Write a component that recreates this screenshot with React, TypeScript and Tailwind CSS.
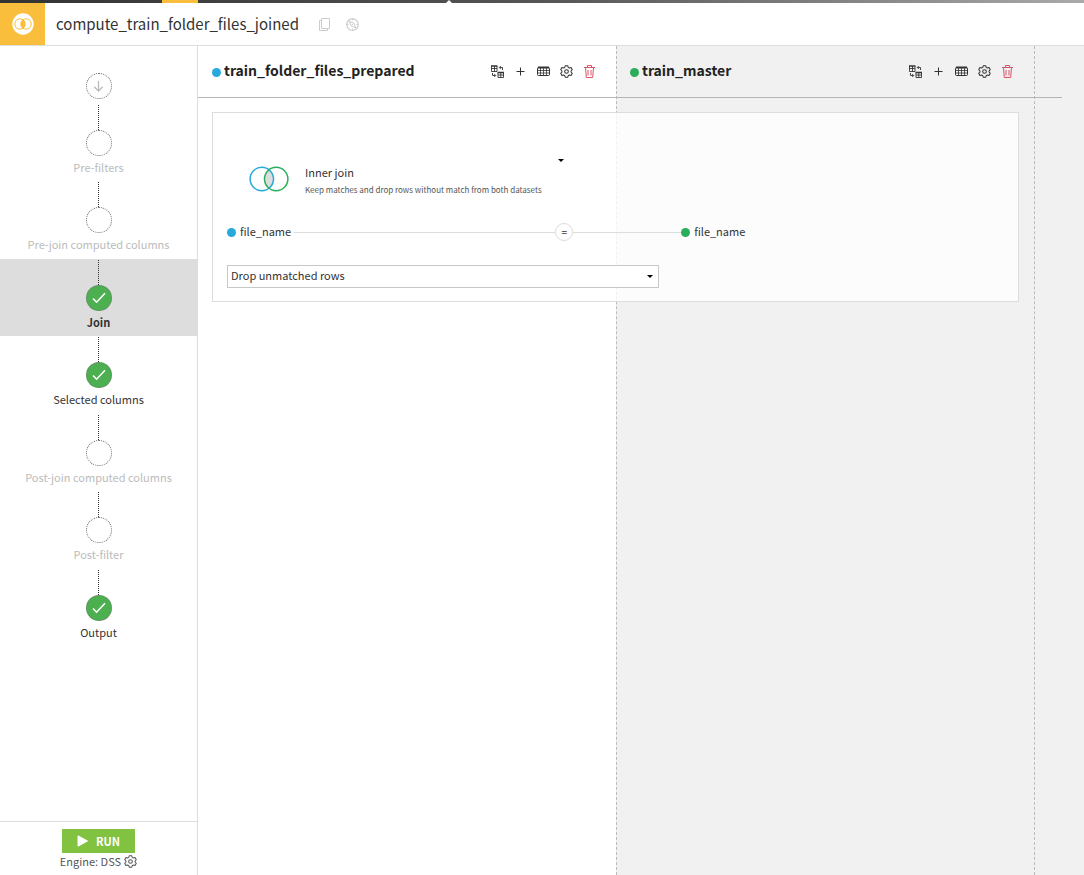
import type { ReactNode } from "react";

type StepStatus = "empty" | "done";

type Step = {
  label: string;
  status: StepStatus;
  active?: boolean;
};

const steps: Step[] = [
  { label: "Pre-filters", status: "empty" },
  { label: "Pre-join computed columns", status: "empty" },
  { label: "Join", status: "done", active: true },
  { label: "Selected columns", status: "done" },
  { label: "Post-join computed columns", status: "empty" },
  { label: "Post-filter", status: "empty" },
  { label: "Output", status: "done" },
];

const GearIcon = () => (
  <svg width="13" height="13" viewBox="0 0 24 24" fill="none" stroke="currentColor" strokeWidth="1.9">
    <path d="M9.8 1.2h4.4l1 3.2 2 1.2 3.3-.8 2.2 3.9-2.3 2.4v1.8l2.3 2.4-2.2 3.9-3.3-.8-2 1.2-1 3.2H9.8l-1-3.2-2-1.2-3.3.8-2.2-3.9 2.3-2.4v-1.8L1.3 8.7l2.2-3.9 3.3.8 2-1.2z" strokeLinejoin="round" />
    <circle cx="12" cy="12" r="3.4" />
  </svg>
);

const ReplaceIcon = () => (
  <svg width="13" height="13" viewBox="0 0 13 13" fill="none" stroke="currentColor">
    <path d="M.5 1v5.5h5.5V1M.5 3.5H6M3.5 1v5.5M7 7.5v5h5.5v-5M7 10h5.5M9.8 7.5v5" strokeWidth=".9" />
    <path d="M0 1h6.4M6.6 7.5H13" strokeWidth="1.4" />
    <path d="M11.5 5V2.5H8.5M9.8 1 8.3 2.5 9.8 4M1.5 8v2.5h3M3.2 9l1.5 1.5L3.2 12" strokeWidth=".9" />
  </svg>
);

const PlusIcon = () => (
  <svg width="13" height="13" viewBox="0 0 13 13" fill="none" stroke="currentColor">
    <path d="M6.5 2.5v8M2.5 6.5h8" />
  </svg>
);

const TableIcon = () => (
  <svg width="13" height="13" viewBox="0 0 13 13" fill="none" stroke="currentColor">
    <rect x=".5" y="2.5" width="12" height="8" rx="1" />
    <path d="M1 2.5h11" strokeWidth="2" />
    <path d="M.5 5.5h12M.5 8h12M3.5 3v7.5M6.5 3v7.5M9.5 3v7.5" strokeWidth=".8" />
  </svg>
);

const TrashIcon = () => (
  <svg width="13" height="13" viewBox="0 0 13 13" fill="none" stroke="currentColor">
    <path d="M1 2.5h11M4.5 2.5v-2h4v2M2.5 2.5l.8 10h6.4l.8-10M5 5v5.5M8 5v5.5" />
  </svg>
);

const CheckIcon = () => (
  <svg width="14" height="12" viewBox="0 0 14 12" fill="none" stroke="white" strokeWidth="1.6">
    <path d="M1 6.5 4.6 10.2 13 1.2" />
  </svg>
);

const Caret = () => (
  <svg width="6" height="3" viewBox="0 0 6 3">
    <path d="M0 0h6L3 3z" fill="black" />
  </svg>
);

const StepCircle = ({ status }: { status: StepStatus }) =>
  status === "done" ? (
    <span className="flex size-[26px] items-center justify-center rounded-full border border-dotted border-[#777] bg-[#4caf50]">
      <CheckIcon />
    </span>
  ) : (
    <span className="size-[26px] rounded-full border border-dotted border-[#666]" />
  );

const StepItem = ({ label, status, active }: Step) => (
  <li className={active ? "flex-1 bg-[#dddddd]" : "flex-1"}>
    <button className="flex w-full flex-col items-center pt-px">
      <span className="h-[25px] border-l border-dotted border-[#333]" />
      <StepCircle status={status} />
      <span
        className={
          active
            ? "mt-[3px] leading-4 font-bold text-[#333]"
            : status === "done"
              ? "mt-[3px] leading-4 text-[#333]"
              : "mt-[3px] leading-4 text-[#bbb]"
        }
      >
        {label}
      </span>
    </button>
  </li>
);

const Sidebar = () => (
  <nav className="flex w-[198px] shrink-0 flex-col border-r border-[#ddd]">
    <div className="flex h-[58px] items-end justify-center pb-[5px]">
      <span className="flex size-[26px] items-center justify-center rounded-full border border-dotted border-[#666]">
        <svg width="11" height="12" viewBox="0 0 11 12" fill="none" stroke="#bbb" strokeWidth="1.3">
          <path d="M5.5 1v10M1.3 6.8l4.2 4.2 4.2-4.2" />
        </svg>
      </span>
    </div>
    <ul className="flex h-[542px] flex-col">
      {steps.map((step) => (
        <StepItem key={step.label} {...step} />
      ))}
    </ul>
    <div className="mt-auto flex h-[54px] flex-col items-center border-t border-[#ddd] pt-[7px]">
      <button className="flex h-6 w-[73px] items-center justify-center gap-2 bg-[#81c241] text-[11px] font-bold text-white">
        <svg width="11" height="12" viewBox="0 0 11 12">
          <path d="M1 .8 10.5 6 1 11.2z" fill="white" stroke="white" strokeLinejoin="round" />
        </svg>
        RUN
      </button>
      <div className="flex items-center gap-[3px] leading-4 text-[#555]">
        Engine: DSS
        <button aria-label="Engine settings">
          <GearIcon />
        </button>
      </div>
    </div>
  </nav>
);

const IconButton = ({ label, children }: { label: string; children: ReactNode }) => (
  <button aria-label={label} className="flex size-[13px] items-center justify-center">
    {children}
  </button>
);

const DatasetHeader = ({ name, dotClass }: { name: string; dotClass: string }) => (
  <div className="flex h-[51px] items-center justify-between pr-5 pl-[14px]">
    <div className="flex items-center gap-[3px]">
      <span className={dotClass} />
      <h2 className="mb-[3px] text-sm leading-5 font-bold text-[#222]">{name}</h2>
    </div>
    <div className="flex items-center gap-[10px] text-[#333]">
      <IconButton label="Replace dataset">
        <ReplaceIcon />
      </IconButton>
      <IconButton label="Add dataset">
        <PlusIcon />
      </IconButton>
      <IconButton label="View columns">
        <TableIcon />
      </IconButton>
      <IconButton label="Dataset settings">
        <GearIcon />
      </IconButton>
      <span className="flex text-[#dc5368]">
        <IconButton label="Remove dataset">
          <TrashIcon />
        </IconButton>
      </span>
    </div>
  </div>
);

const JoinCard = () => (
  <section className="mt-[14px] mr-[65px] ml-[14px] h-[190px] border border-[#ddd] bg-white/80 px-[14px]">
    <button className="mt-[43px] flex h-[50px] w-[337px] items-start pl-[22px] text-left">
      <svg className="mt-[10px]" width="40" height="26" viewBox="0 0 40 26" fill="none" strokeWidth="1.5">
        <path d="M20 3.2a12 12 0 0 1 0 19.6 12 12 0 0 1 0-19.6z" fill="#ddd" />
        <circle cx="12.8" cy="13" r="11.7" stroke="#28a9dd" />
        <circle cx="27.2" cy="13" r="11.7" stroke="#2aae5c" />
      </svg>
      <span className="mt-2 ml-4 flex flex-1 flex-col text-[#333]">
        <span className="leading-4">Inner join</span>
        <span className="mt-0.5 text-[8px] leading-4 whitespace-nowrap text-[#555]">
          Keep matches and drop rows without match from both datasets
        </span>
      </span>
      <span className="mt-[3px] flex">
        <Caret />
      </span>
    </button>
    <div className="mt-4 flex h-5 items-center text-[#333]">
      <span className="size-[9px] rounded-full bg-[#28a9dd]" />
      <span className="mb-0.5 ml-1 leading-5">file_name</span>
      <span className="ml-[3px] h-px w-[261px] bg-[#ddd]" />
      <button
        aria-label="Join condition"
        className="flex size-[18px] items-center justify-center rounded-full border border-[#ddd] bg-white text-[10px] leading-3"
      >
        =
      </button>
      <span className="h-px w-[108px] bg-[#ddd]" />
      <span className="size-[9px] rounded-full bg-[#2aae5c]" />
      <span className="mb-0.5 ml-1 leading-5">file_name</span>
    </div>
    <div className="relative mt-[23px] w-[432px]">
      <select
        aria-label="Unmatched rows"
        className="block h-[23px] w-full appearance-none border border-[#c8c8c8] bg-white px-[3px] pb-[3px] leading-4 text-[#333]"
      >
        <option>Drop unmatched rows</option>
      </select>
      <span className="pointer-events-none absolute top-[10px] right-[6px] flex">
        <Caret />
      </span>
    </div>
  </section>
);

export default function App() {
  return (
    <div className="flex min-h-screen flex-col bg-white font-['Source_Sans_Pro','Noto_Sans_CJK_SC',sans-serif] text-[11px]">
      <div className="flex h-[3px] bg-linear-to-r from-[#333] via-[#555] to-[#aaa]">
        <span className="ml-[162px] w-9 bg-[#f9be3c]" />
        <svg className="ml-[247px]" width="8" height="3" viewBox="0 0 8 3">
          <path d="M1 3 4 0l3 3z" fill="white" />
        </svg>
      </div>
      <header className="flex h-[43px] items-center border-b border-[#ddd]">
        <div className="flex h-full w-[45px] items-center justify-center bg-[#f9be3c]">
          <svg width="22" height="22" viewBox="0 0 22 22">
            <circle cx="11" cy="11" r="10.7" fill="white" />
            <path d="M11 6.6a5.3 5.3 0 0 1 0 8.8 5.3 5.3 0 0 1 0-8.8z" fill="#f9be3c" />
            <g fill="none" stroke="#f9be3c">
              <circle cx="8" cy="11" r="5.2" />
              <circle cx="14" cy="11" r="5.2" />
            </g>
          </svg>
        </div>
        <h1 className="ml-[11px] text-[15px] leading-6 text-[#333]">compute_train_folder_files_joined</h1>
        <button aria-label="Copy name" className="ml-[19px]">
          <svg width="13" height="13" viewBox="0 0 13 13" fill="none" stroke="#ccc">
            <path d="M3.5.5h8v10h-8zM3.5 2.5h-2v10h8v-2" />
          </svg>
        </button>
        <button aria-label="Navigate flow" className="ml-[15px]">
          <svg width="13" height="13" viewBox="0 0 13 13" fill="none" stroke="#ccc">
            <circle cx="6.5" cy="6.5" r="5.8" strokeWidth="1.2" />
            <path d="m3 3 4.8 2.2L10 10 5.2 7.8zM5.2 7.8l2.6-2.6" />
            <path d="M6.5 1v1.5M6.5 10.5V12M1 6.5h1.5M10.5 6.5H12" />
          </svg>
        </button>
      </header>
      <div className="flex flex-1">
        <Sidebar />
        <main className="grid min-w-0 flex-1 grid-cols-[418fr_418fr_50fr] grid-rows-[auto_1fr]">
          <div className="col-start-2 row-span-2 row-start-1 border-l border-dashed border-[#bbb] bg-[#f1f1f1]" />
          <div className="col-start-3 row-span-2 row-start-1 border-l border-dashed border-[#bbb] bg-[#f1f1f1]" />
          <div className="col-span-3 col-start-1 row-start-1 mr-[22px] border-b border-[#b5b5b5]" />
          <div className="col-start-1 row-start-1 mb-px">
            <DatasetHeader name="train_folder_files_prepared" dotClass="mt-0.5 size-[9px] rounded-full bg-[#28a9dd]" />
          </div>
          <div className="col-start-2 row-start-1 mb-px">
            <DatasetHeader name="train_master" dotClass="mt-0.5 size-[9px] rounded-full bg-[#2aae5c]" />
          </div>
          <div className="col-span-3 col-start-1 row-start-2">
            <JoinCard />
          </div>
        </main>
      </div>
    </div>
  );
}
